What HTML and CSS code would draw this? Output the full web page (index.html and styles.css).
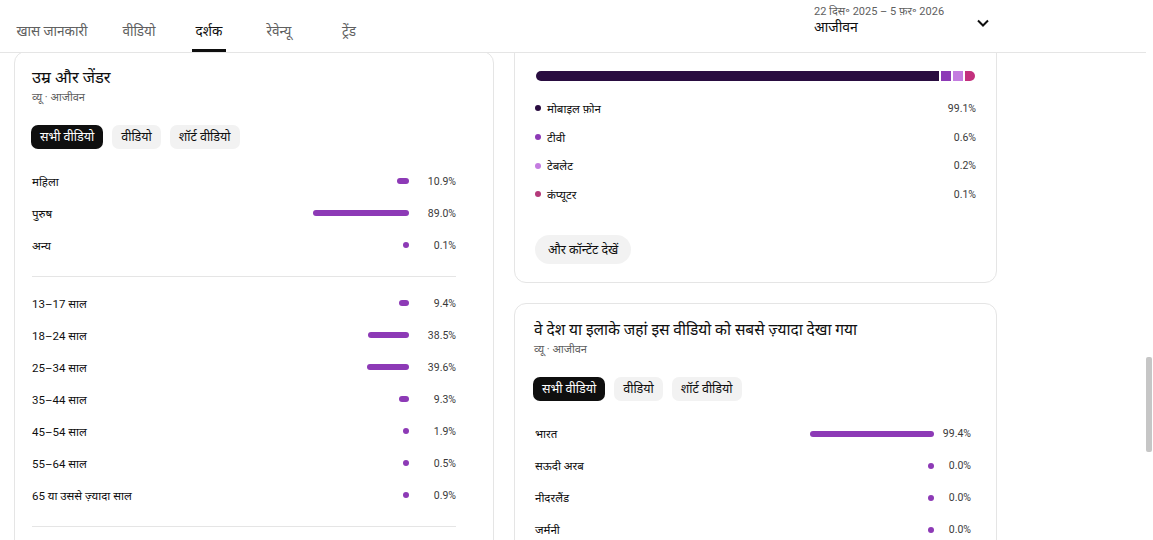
FILE: index.html
```html
<!DOCTYPE html>
<html lang="hi">
<head>
<meta charset="utf-8">
<title>दर्शक</title>
<link rel="stylesheet" href="styles.css">
</head>
<body>
<div class="page">
  <div class="main">
    <header class="header">
      <nav class="tabs">
        <div class="tab"><span>खास जानकारी</span></div>
        <div class="tab"><span>वीडियो</span></div>
        <div class="tab active"><span>दर्शक</span></div>
        <div class="tab"><span>रेवेन्यू</span></div>
        <div class="tab"><span>ट्रेंड</span></div>
      </nav>
      <div class="range">
        <div class="range-text">
          <div class="range-dates">22 दिस॰ 2025 – 5 फ़र॰ 2026</div>
          <div class="range-label">आजीवन</div>
        </div>
        <svg class="chev" width="14" height="10" viewBox="0 0 14 10"><path d="M2 2.5 L7 7.5 L12 2.5" fill="none" stroke="#0f0f0f" stroke-width="2"/></svg>
      </div>
    </header>
    <div class="content">
      <section class="card card-left">
        <h2 class="card-title">उम्र और जेंडर</h2>
        <div class="card-sub">व्यू · आजीवन</div>
        <div class="chips">
          <span class="chip on">सभी वीडियो</span>
          <span class="chip">वीडियो</span>
          <span class="chip">शॉर्ट वीडियो</span>
        </div>
        <div class="rows">
          <div class="row"><span class="label">महिला</span><span class="bar" style="width:12px"></span><span class="pct">10.9%</span></div>
          <div class="row"><span class="label">पुरुष</span><span class="bar" style="width:96px"></span><span class="pct">89.0%</span></div>
          <div class="row"><span class="label">अन्य</span><span class="bar" style="width:6px"></span><span class="pct">0.1%</span></div>
        </div>
        <div class="divider"></div>
        <div class="rows rows-next">
          <div class="row"><span class="label">13–17 साल</span><span class="bar" style="width:10px"></span><span class="pct">9.4%</span></div>
          <div class="row"><span class="label">18–24 साल</span><span class="bar" style="width:41px"></span><span class="pct">38.5%</span></div>
          <div class="row"><span class="label">25–34 साल</span><span class="bar" style="width:42px"></span><span class="pct">39.6%</span></div>
          <div class="row"><span class="label">35–44 साल</span><span class="bar" style="width:10px"></span><span class="pct">9.3%</span></div>
          <div class="row"><span class="label">45–54 साल</span><span class="bar" style="width:6px"></span><span class="pct">1.9%</span></div>
          <div class="row"><span class="label">55–64 साल</span><span class="bar" style="width:6px"></span><span class="pct">0.5%</span></div>
          <div class="row"><span class="label">65 या उससे ज़्यादा साल</span><span class="bar" style="width:6px"></span><span class="pct">0.9%</span></div>
        </div>
        <div class="divider"></div>
      </section>
      <div class="col-right">
        <section class="card card-device">
          <div class="stack">
            <span class="seg seg-mobile"></span>
            <span class="seg seg-tv"></span>
            <span class="seg seg-tablet"></span>
            <span class="seg seg-pc"></span>
          </div>
          <div class="legend">
            <div class="lrow"><span class="dot d-mobile"></span><span class="label">मोबाइल फ़ोन</span><span class="lpct">99.1%</span></div>
            <div class="lrow"><span class="dot d-tv"></span><span class="label">टीवी</span><span class="lpct">0.6%</span></div>
            <div class="lrow"><span class="dot d-tablet"></span><span class="label">टेबलेट</span><span class="lpct">0.2%</span></div>
            <div class="lrow"><span class="dot d-pc"></span><span class="label">कंप्यूटर</span><span class="lpct">0.1%</span></div>
          </div>
          <button class="more">और कॉन्टेंट देखें</button>
        </section>
        <section class="card card-geo">
          <h2 class="card-title">वे देश या इलाके जहां इस वीडियो को सबसे ज़्यादा देखा गया</h2>
          <div class="card-sub">व्यू · आजीवन</div>
          <div class="chips">
            <span class="chip on">सभी वीडियो</span>
            <span class="chip">वीडियो</span>
            <span class="chip">शॉर्ट वीडियो</span>
          </div>
          <div class="rows rows-geo">
            <div class="row"><span class="label">भारत</span><span class="bar" style="width:124px"></span><span class="pct">99.4%</span></div>
            <div class="row"><span class="label">सऊदी अरब</span><span class="bar" style="width:6px"></span><span class="pct">0.0%</span></div>
            <div class="row"><span class="label">नीदरलैंड</span><span class="bar" style="width:6px"></span><span class="pct">0.0%</span></div>
            <div class="row"><span class="label">जर्मनी</span><span class="bar" style="width:6px"></span><span class="pct">0.0%</span></div>
          </div>
        </section>
      </div>
    </div>
  </div>
  <div class="scrollbar"><div class="thumb"></div></div>
</div>
</body>
</html>
```

FILE: styles.css
```css
* { box-sizing: border-box; }
html, body { margin: 0; padding: 0; background: #fff; }
body {
  font-family: Roboto, "Noto Sans", "Noto Sans Devanagari", sans-serif;
  color: #0f0f0f;
  width: 1153px;
  height: 540px;
  overflow: hidden;
}
.page { display: flex; height: 540px; }
.main { width: 1146px; display: flex; flex-direction: column; height: 540px; }

.header {
  height: 53px;
  border-bottom: 1px solid #e5e5e5;
  display: flex;
  flex: none;
}
.tabs { display: flex; padding-left: 0; }
.tab {
  min-width: 70px;
  padding: 0 12.5px;
  display: flex;
  justify-content: center;
}
.tab span {
  height: 52px;
  padding: 21px 4px 0;
  font-size: 13.5px;
  line-height: 20px;
  color: #606060;
  border-bottom: 3px solid transparent;
  white-space: nowrap;
}
.tab.active span { color: #0f0f0f; border-bottom-color: #0f0f0f; }

.range {
  margin-left: auto;
  margin-right: 154px;
  width: 178px;
  display: flex;
  align-items: flex-start;
  justify-content: space-between;
  padding-top: 4px;
}
.range-text { display: flex; flex-direction: column; }
.range-dates { font-size: 11px; line-height: 15px; color: #606060; }
.range-label { font-size: 14px; line-height: 17px; color: #0f0f0f; }
.chev { margin-top: 14px; margin-right: 2px; }

.content {
  flex: 1;
  overflow: hidden;
  display: flex;
  align-items: flex-start;
  padding-left: 14px;
  gap: 20px;
}
.card {
  border: 1px solid #e5e5e5;
  border-radius: 12px;
  background: #fff;
}
.card-left {
  width: 480px;
  margin-top: -2px;
  padding: 14px 37px 40px 17px;
}
.card-title {
  margin: 0;
  font-size: 16.5px;
  font-weight: 400;
  line-height: 24px;
}
.card-geo .card-title { font-size: 15.5px; }
.card-sub {
  font-size: 11px;
  line-height: 16px;
  color: #606060;
}
.chips { display: flex; gap: 9px; margin-top: 19px; margin-left: -1px; }
.chip {
  height: 24px;
  padding: 0 9px;
  border-radius: 7px;
  background: #f2f2f2;
  font-size: 12.5px;
  line-height: 24px;
  color: #0f0f0f;
}
.chip.on { background: #0f0f0f; color: #fff; }

.rows { margin-top: 16px; }
.rows-next { margin-top: 0; }
.row {
  height: 32px;
  display: flex;
  align-items: center;
}
.label { flex: 1; font-size: 11.5px; color: #0f0f0f; }
.bar {
  height: 6px;
  border-radius: 3px;
  background: #8d3ab6;
}
.pct {
  width: 47px;
  text-align: right;
  font-size: 10.5px;
  color: #3a3a3a;
}
.divider { height: 1px; background: #e5e5e5; margin: 15px 0 10px; }

.col-right {
  width: 483px;
  margin-top: -40px;
  display: flex;
  flex-direction: column;
  gap: 20px;
}
.card-device { padding: 57px 20px 18px; }
.stack { display: flex; gap: 2px; height: 10px; margin: 0 1px; }
.seg { height: 10px; width: 10px; }
.seg-mobile { flex: 1; background: #290c40; border-radius: 5px 0 0 5px; }
.seg-tv { background: #8d3ab6; }
.seg-tablet { background: #c47ce0; }
.seg-pc { background: #c3307d; border-radius: 0 5px 5px 0; }

.legend { margin-top: 13px; }
.lrow { height: 28.7px; display: flex; align-items: center; }
.dot { width: 6px; height: 6px; border-radius: 50%; margin-right: 6px; }
.d-mobile { background: #290c40; }
.d-tv { background: #8d3ab6; }
.d-tablet { background: #c47ce0; }
.d-pc { background: #b43a7a; }
.lpct { font-size: 10.5px; color: #3a3a3a; }

.more {
  margin-top: 26px;
  height: 29px;
  padding: 0 13px;
  border: none;
  border-radius: 15px;
  background: #f2f2f2;
  font-family: inherit;
  font-size: 12.5px;
  color: #0f0f0f;
}

.card-geo { padding: 14px 25px 0 19px; height: 300px; }
.rows-geo { margin-top: 17px; }
.rows-geo .pct { width: 37px; }
.rows-geo .label { padding-left: 1px; }

.scrollbar { width: 7px; height: 540px; }
.thumb {
  margin-top: 357px;
  width: 6px;
  height: 95px;
  background: #c6c6c6;
  border-radius: 2px;
}
```
